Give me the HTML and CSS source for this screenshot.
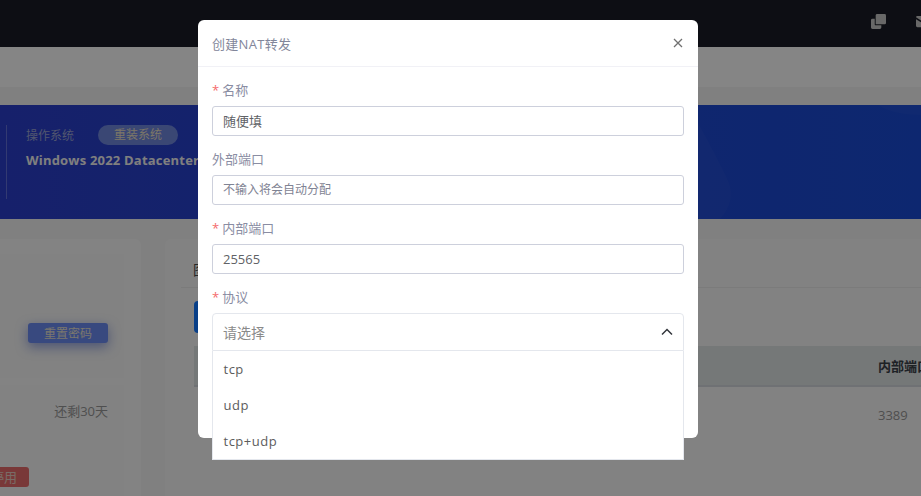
FILE: index.html
```html
<!DOCTYPE html>
<html lang="zh">
<head>
<meta charset="utf-8">
<title>创建NAT转发</title>
<link rel="stylesheet" href="styles.css">
</head>
<body>
<div class="page">
  <header class="topbar">
    <svg class="top-icon" viewBox="0 0 16 16"><path d="M5 1.500A1.500 1.500 0 0 1 6.500 0h8A1.500 1.500 0 0 1 16 1.500v8a1.500 1.500 0 0 1-1.500 1.500H5z"/><path d="M0 6.500A1.500 1.500 0 0 1 1.500 5H4v6.500A.5.5 0 0 0 4.500 12H11v2.500A1.500 1.500 0 0 1 9.500 16h-8A1.500 1.500 0 0 1 0 14.500z"/></svg>
    <svg class="top-icon" viewBox="0 0 16 16"><path d="M0 3.500A1.500 1.500 0 0 1 1.500 2h13A1.500 1.500 0 0 1 16 3.500L8 8.500 0 3.500z"/><path d="M0 5.500v7A1.500 1.500 0 0 0 1.500 14h13a1.500 1.500 0 0 0 1.500-1.500v-7l-8 5z"/></svg>
  </header>
  <div class="subbar"></div>
  <section class="hero">
    <svg class="hero-art" viewBox="0 0 921 114" preserveAspectRatio="none"><path class="blob" d="M660 0L698 18C705 30 722 62 729 78C733 90 731 102 720 114H600V0z"/><path class="blob" d="M878 0C888 7 905 10 921 10V0z"/></svg>
    <div class="hero-block">
      <div class="hero-head">
        <span class="hero-label">操作系统</span>
        <span class="pill">重装系统</span>
      </div>
      <div class="hero-value">Windows 2022 Datacenter</div>
    </div>
  </section>
  <main class="content">
    <aside class="left-col">
      <div class="card card-pass"><button class="reset">重置密码</button></div>
      <div class="card card-time">
        <div class="remain">还剩30天</div>
        <span class="tag">停用</span>
      </div>
    </aside>
    <section class="right-col">
      <div class="tab-row"><span class="tab">图</span></div>
      <div class="add-btn"></div>
      <div class="table-head"><span class="th">内部端口</span></div>
      <div class="table-row"><span class="td">3389</span></div>
    </section>
  </main>
</div>

<div class="overlay"></div>
<div class="modal">
  <div class="modal-head">
    <span class="modal-title">创建NAT转发</span>
    <svg class="close" viewBox="0 0 10 10"><path d="M1 1l8 8M9 1l-8 8"/></svg>
  </div>
  <form class="modal-body">
    <div class="field">
      <label class="label"><span class="star">*</span>名称</label>
      <div class="input value">随便填</div>
    </div>
    <div class="field">
      <label class="label">外部端口</label>
      <div class="input placeholder">不输入将会自动分配</div>
    </div>
    <div class="field">
      <label class="label"><span class="star">*</span>内部端口</label>
      <div class="input value">25565</div>
    </div>
    <div class="field field-select">
      <label class="label"><span class="star">*</span>协议</label>
      <div class="select">
        <span>请选择</span>
        <svg class="chev" viewBox="0 0 12 8"><path d="M1 6.500l5-5 5 5"/></svg>
      </div>
      <ul class="menu">
        <li>tcp</li>
        <li>udp</li>
        <li>tcp+udp</li>
      </ul>
    </div>
  </form>
</div>
</body>
</html>
```

FILE: styles.css
```css
* { box-sizing: border-box; }
html, body { margin: 0; height: 100%; overflow: hidden; }
body {
  font-family: "Open Sans", "Noto Sans CJK SC", sans-serif;
  font-size: 13px;
  background: #f1f1f1;
  color: #606266;
}
.page { width: 921px; height: 496px; overflow: hidden; display: flex; flex-direction: column; }

.topbar {
  height: 47px; flex: none; background: #1a1c26;
  display: flex; align-items: flex-start; justify-content: flex-end;
  gap: 30px; padding: 14px 0 0; margin-right: -10px;
}
.top-icon { width: 15px; height: 15px; fill: #c4c4c4; }

.subbar { height: 40px; flex: none; background: #fbfbfb; }

.hero {
  position: relative; height: 114px; flex: none; margin-top: 18px;
  background: linear-gradient(90deg, #2b3eca 0%, #1f46cf 60%, #1a4bd3 100%);
  padding: 20px 0 0 6px;
}
.hero-art { position: absolute; inset: 0; width: 100%; height: 100%; }
.blob { fill: rgba(255,255,255,.025); }
.hero-block {
  position: relative; height: 74px; padding-left: 19px;
  border-left: 1px solid rgba(255,255,255,.25);
}
.hero-head { display: flex; align-items: center; gap: 24px; height: 20px; color: #9aa2d2; }
.hero-label { font-size: 12px; }
.pill {
  width: 80px; height: 20px; border-radius: 10px; background: #6f86dc;
  color: #e8dfc4; font-size: 12px; text-align: center; line-height: 20px;
}
.hero-value { margin-top: 5px; font-size: 13px; font-weight: 700; letter-spacing: .2px; color: #f0f0f0; line-height: 20px; white-space: nowrap; }

.content { flex: 1; display: flex; padding-top: 20px; min-height: 0; }
.left-col {
  width: 141px; flex: none; padding: 15px 17px 0 0; background: #f8f8f8; border-radius: 0 6px 0 0;
  display: flex; flex-direction: column; gap: 7px;
}
.card { background: #f5f5f5; flex: none; position: relative; }
.card-pass { height: 124px; display: flex; align-items: flex-end; justify-content: flex-end; padding: 0 16px 35px 0; }
.reset {
  width: 80px; height: 20px; border: 0; border-radius: 3px; padding: 0;
  background: #6b8bf0; color: #e6e0cf; font: 12px "Open Sans", "Noto Sans CJK SC", sans-serif;
  box-shadow: 0 4px 12px rgba(60,90,200,.55);
}
.card-time { height: 120px; }
.remain { text-align: right; padding: 17px 16px 0 0; font-size: 13px; color: #959595; line-height: 18px; }
.tag {
  position: absolute; right: 95px; top: 82px; width: 40px; height: 20px; border-radius: 3px;
  background: #e56b6b; color: #e4cbc0; font-size: 13px; line-height: 20px; text-align: right; padding-right: 12px;
}
.right-col {
  flex: 1; margin-left: 24px; background: #f6f6f6; border-radius: 6px 0 0 0;
  padding: 0 0 0 29px; min-width: 0;
}
.tab-row { height: 49px; margin-left: -13px; padding: 22px 0 0 12px; border-bottom: 1px solid #e8e8e8; color: #4a4a4a; font-size: 14px; line-height: 18px; }
.add-btn { width: 40px; height: 32px; margin-top: 13px; background: #1277ff; border-radius: 4px; }
.table-head {
  height: 41px; margin-top: 13px; background: #dde2e2; border-bottom: 2px solid #d2d5dc;
  display: flex; align-items: center; padding-left: 684px; white-space: nowrap; overflow: hidden;
}
.th { font-weight: 700; font-size: 13px; color: #3a4048; }
.table-row { padding: 19px 0 0 684px; color: #959595; font-size: 13px; line-height: 18px; }

.overlay { position: fixed; inset: 0; background: rgba(0,0,0,.47); }

.modal {
  position: fixed; left: 198px; top: 20px; width: 500px; height: 418px;
  background: #fff; border-radius: 6px;
}
.modal-head {
  height: 47px; border-bottom: 1px solid #f1f1f6; padding: 0 14px;
  display: flex; align-items: center; justify-content: space-between;
}
.modal-title { font-size: 13px; letter-spacing: .3px; color: #82869a; }
.close { width: 10px; height: 10px; fill: none; stroke: #707070; stroke-width: 1.300; margin-right: 1px; }
.modal-body { padding: 13px 14px 0; display: flex; flex-direction: column; }
.field { position: relative; height: 69px; }
.label { display: block; height: 26px; line-height: 20px; font-size: 13px; color: #8a8da3; }
.star { color: #f56c6c; margin-right: 3px; }
.input {
  height: 30px; border: 1px solid #cdd0dc; border-radius: 3px; padding: 0 10px;
  line-height: 28px; font-size: 13px;
}
.value { color: #606266; }
.placeholder { color: #7f8393; font-size: 12px; }
.select {
  height: 38px; border: 1px solid #e4e7ed; border-radius: 4px 4px 0 0; padding: 0 10px;
  display: flex; align-items: center; justify-content: space-between; font-size: 14px; color: #8a8a8a;
}
.chev { width: 12px; height: 8px; fill: none; stroke: #33363c; stroke-width: 1.500; }
.menu {
  position: absolute; left: 0; right: 0; top: 64px; margin: 0; padding: 0; list-style: none;
  background: #fff; border: 1px solid #e4e7ed; border-top: 0;
  height: 109px;
}
.menu li { height: 36px; line-height: 36px; padding-left: 10.500px; font-size: 13px; letter-spacing: .5px; color: #5c5c5c; }
```
